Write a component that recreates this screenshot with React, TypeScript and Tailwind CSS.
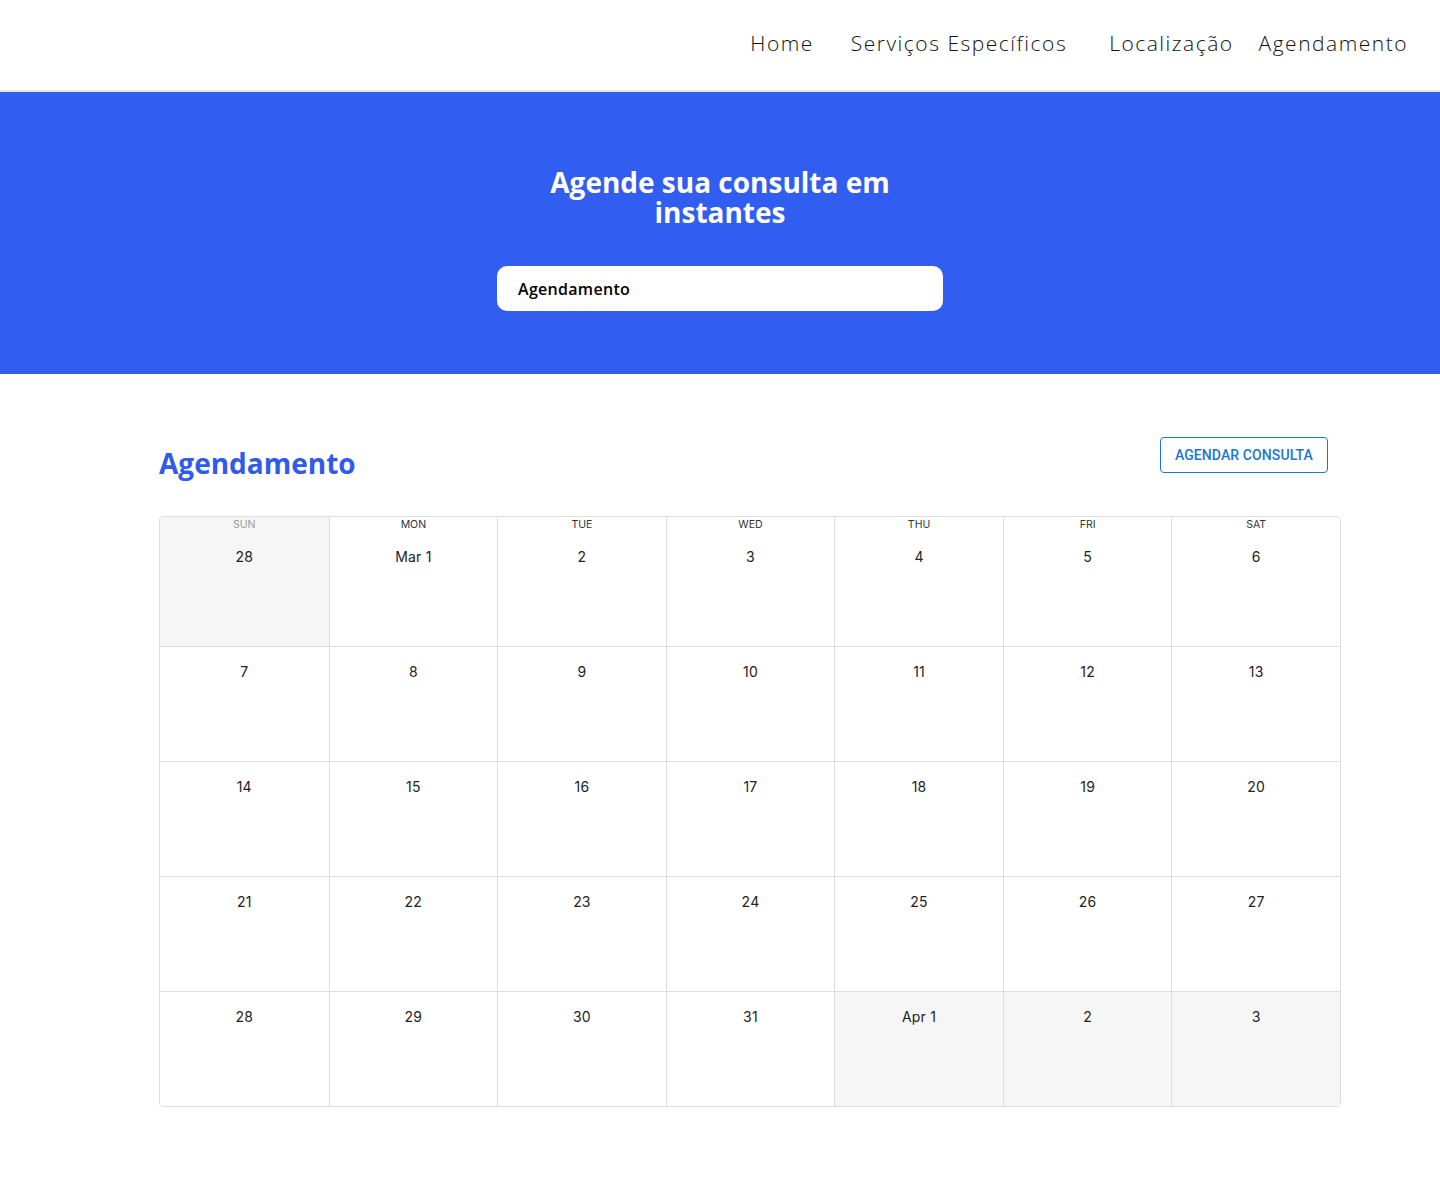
import React from "react";

const heads = ["SUN", "MON", "TUE", "WED", "THU", "FRI", "SAT"];

const weeks: { label: string; off?: boolean }[][] = [
  [{ label: "28", off: true }, { label: "Mar 1" }, { label: "2" }, { label: "3" }, { label: "4" }, { label: "5" }, { label: "6" }],
  [{ label: "7" }, { label: "8" }, { label: "9" }, { label: "10" }, { label: "11" }, { label: "12" }, { label: "13" }],
  [{ label: "14" }, { label: "15" }, { label: "16" }, { label: "17" }, { label: "18" }, { label: "19" }, { label: "20" }],
  [{ label: "21" }, { label: "22" }, { label: "23" }, { label: "24" }, { label: "25" }, { label: "26" }, { label: "27" }],
  [{ label: "28" }, { label: "29" }, { label: "30" }, { label: "31" }, { label: "Apr 1", off: true }, { label: "2", off: true }, { label: "3", off: true }],
];

const Header = () => {
  return (
    <header className="h-[92px] border-b-2 border-[#e6e6e6] bg-white flex items-center justify-end pr-[32px] pb-[2px]">
      <nav className="flex items-center text-[21px] font-light text-[#111] font-['Open_Sans',sans-serif] tracking-[1.5px]">
        <a className="mr-[37px]">Home</a>
        <a className="mr-[42px]">Serviços Específicos</a>
        <a className="mr-[25px]">Localização</a>
        <a>Agendamento</a>
      </nav>
    </header>
  );
};

const Hero = () => {
  return (
    <section className="bg-[#315DF0] h-[282px] flex flex-col items-center pt-[75px]">
      <h1 className="text-white text-center font-bold text-[28px] leading-[30px] font-['Open_Sans',sans-serif]">
        Agende sua consulta em
        <br />
        instantes
      </h1>
      <div className="mt-[39px] w-[446px] h-[45px] bg-white rounded-[10px] flex items-center pl-[21px]">
        <span className="text-[16px] font-semibold text-black font-['Open_Sans',sans-serif] tracking-[0.3px]">Agendamento</span>
      </div>
    </section>
  );
};

const Calendar = () => {
  return (
    <div className="border border-[#dddddd] rounded-[4px] overflow-hidden font-['Inter',sans-serif]">
      {weeks.map((week, wi) => (
        <div key={wi} className={`grid grid-cols-7 ${wi > 0 ? "border-t border-[#dddddd]" : ""}`}>
          {week.map((d, di) => (
            <div
              key={di}
              className={`${wi === 0 ? "h-[129px]" : "h-[114px]"} ${di > 0 ? "border-l border-[#dddddd]" : ""} ${d.off ? "bg-[#f6f6f6]" : "bg-white"} flex flex-col items-center`}
            >
              {wi === 0 && (
                <div className={`h-[15px] pt-[1px] text-[10.5px] leading-[13px] ${di === 0 ? "text-[#9a9a9a]" : "text-[#333]"}`}>
                  {heads[di]}
                </div>
              )}
              <div className="mt-[16px] text-[14px] leading-[18px] text-[#222] tracking-[0.2px]">{d.label}</div>
            </div>
          ))}
        </div>
      ))}
    </div>
  );
};

export default function App() {
  return (
    <div className="min-h-[1192px] bg-white">
      <Header />
      <Hero />
      <main className="px-[159px] pt-[63px] pb-[85px] pr-[99px]">
        <div className="flex items-start justify-between pr-[13px]">
          <h2 className="mt-[9px] text-[28px] leading-[34px] font-bold text-[#2F5BEA] font-['Open_Sans',sans-serif]">
            Agendamento
          </h2>
          <button className="h-[36px] px-[14px] border border-[#1976d2] rounded-[4px] text-[#1976d2] text-[14px] font-medium uppercase tracking-[0.1px] font-['Roboto',sans-serif]">
            Agendar Consulta
          </button>
        </div>
        <div className="mt-[36px]">
          <Calendar />
        </div>
      </main>
    </div>
  );
}
